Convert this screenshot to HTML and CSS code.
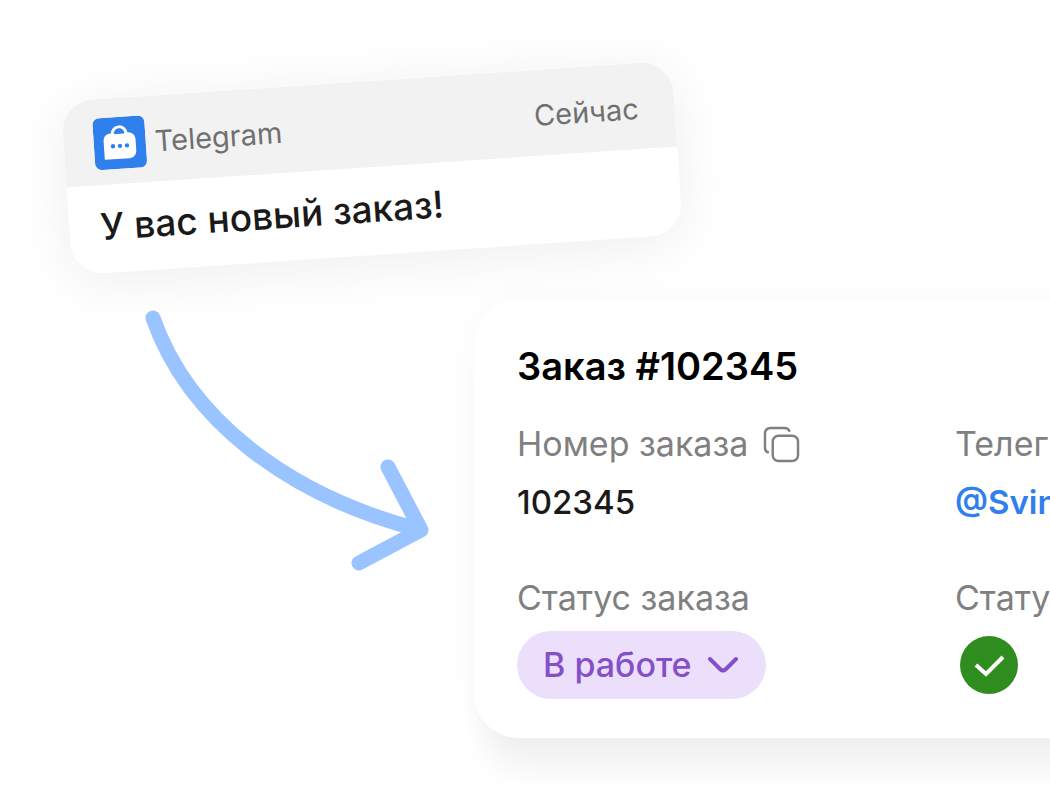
FILE: index.html
```html
<!DOCTYPE html>
<html lang="ru">
<head>
    <meta charset="UTF-8">
    <meta name="viewport" content="width=device-width, initial-scale=1.0">
    <title>Заказ #102345</title>
    <link rel="stylesheet" href="styles.css">
</head>
<body>
    <main class="scene">
        <article class="notification">
            <header class="notification-header">
                <svg class="app-icon" viewBox="0 0 52 52" aria-hidden="true">
                    <rect width="52" height="52" rx="7" fill="#2f80ed"/>
                    <path d="M19 18v-1a7 7 0 0 1 14 0v1" fill="none" stroke="#fff" stroke-width="3"/>
                    <path d="M10 42V23a7 7 0 0 1 7-7h18a7 7 0 0 1 7 7v12a7 7 0 0 1-7 7z" fill="#fff"/>
                    <path d="M21 17a5 5 0 0 1 10 0" fill="#2f80ed"/>
                    <g fill="#2f80ed">
                        <circle cx="19" cy="29" r="2.200"/>
                        <circle cx="26" cy="29" r="2.200"/>
                        <circle cx="33" cy="29" r="2.200"/>
                    </g>
                </svg>
                <span class="app-name">Telegram</span>
                <time class="time">Сейчас</time>
            </header>
            <p class="message">У вас новый заказ!</p>
        </article>

        <div class="flow">
            <svg class="arrow" viewBox="0 0 285 262" aria-hidden="true">
                <path d="M8 8C43 108 142 186 276 220M243 157L276 220L214 253"/>
            </svg>

            <section class="order">
                <h1 class="order-title">Заказ #102345</h1>
                <div class="fields">
                    <div class="field">
                        <div class="label">
                            <span>Номер заказа</span>
                            <button class="copy" type="button" aria-label="Скопировать">
                                <svg viewBox="0 0 36 36">
                                    <rect x="9" y="9" width="26" height="26" rx="6"/>
                                    <path d="M4 26Q1 25 1 21V7Q1 1 7 1H21Q25 1 26 4"/>
                                </svg>
                            </button>
                        </div>
                        <span class="value">102345</span>
                    </div>
                    <div class="field">
                        <div class="label">Телеграм</div>
                        <a class="value link" href="#">@Svin</a>
                    </div>
                    <div class="field field-status">
                        <label class="label" for="status">Статус заказа</label>
                        <div class="status">
                            <select id="status">
                                <option>В работе</option>
                            </select>
                            <svg class="chevron" viewBox="0 0 32 18" aria-hidden="true">
                                <path d="M3 3L13 13Q16 16 19 13L29 3"/>
                            </svg>
                        </div>
                    </div>
                    <div class="field field-status">
                        <div class="label">Статус</div>
                        <svg class="done" viewBox="0 0 58 58" role="img" aria-label="Готово">
                            <circle cx="29" cy="29" r="29" fill="#2f8d20"/>
                            <path d="M16 29L26 38L43 21"/>
                        </svg>
                    </div>
                </div>
            </section>
        </div>
    </main>
</body>
</html>
```
FILE: styles.css
```css
:root {
    --blue: #2f80ed;
    --sky: #99c4ff;
    --gray: #808080;
    --purple: #8450c8;
    --lilac: #ecdffc;
}

* {
    box-sizing: border-box;
}

body {
    margin: 0;
    background: #fff;
    color: #1a1a1a;
    font-family: Inter, "Liberation Sans", sans-serif;
}

.scene {
    display: flow-root;
    min-height: 100vh;
    overflow: hidden;
}

/* Notification */
.notification {
    width: 612px;
    margin: 81px 0 0 66px;
    border-radius: 32px;
    overflow: hidden;
    background: #fff;
    box-shadow: 0 8px 56px rgba(0, 0, 0, 0.07);
    transform: rotate(-3.84deg);
}

.notification-header {
    display: flex;
    align-items: center;
    gap: 9px;
    height: 86px;
    padding: 4px 36px 0 30px;
    background: #f2f2f2;
    color: #707070;
    font-size: 29px;
}

.app-icon {
    width: 52px;
    height: 52px;
}

.time {
    margin-left: auto;
}

.message {
    margin: 0;
    padding: 18px 31px 22px;
    font-size: 37px;
    font-weight: 500;
    line-height: 48px;
}

/* Arrow and order card */
.flow {
    display: flex;
    align-items: flex-start;
    gap: 44px;
    margin: 45px 0 0 145px;
}

.arrow {
    flex: none;
    width: 285px;
    margin-top: 10px;
    fill: none;
    stroke: var(--sky);
    stroke-width: 15;
    stroke-linecap: round;
    stroke-linejoin: round;
}

.order {
    flex: none;
    padding: 42px 43px 39px;
    border-radius: 44px;
    background: #fff;
    box-shadow: 0 44px 30px -12px rgba(0, 0, 0, 0.05), 0 0 32px rgba(0, 0, 0, 0.03);
}

.order-title {
    margin: 0 0 32px;
    color: #000;
    font-size: 38px;
    font-weight: 600;
    line-height: 48px;
}

.fields {
    display: grid;
    grid-template-columns: 438px 438px;
    row-gap: 52px;
}

.field {
    display: flex;
    flex-direction: column;
    align-items: flex-start;
    gap: 14px;
}

.field-status {
    gap: 11px;
}

.label {
    display: flex;
    align-items: center;
    gap: 16px;
    color: var(--gray);
    font-size: 34px;
    line-height: 44px;
}

.copy {
    display: flex;
    padding: 0;
    border: 0;
    background: none;
    cursor: pointer;
}

.copy svg {
    width: 35px;
    height: 35px;
    fill: none;
    stroke: var(--gray);
    stroke-width: 2.5;
    stroke-linecap: round;
    overflow: visible;
}

.value {
    font-size: 33px;
    font-weight: 500;
    line-height: 44px;
}

.link {
    color: var(--blue);
    font-weight: 600;
    text-decoration: none;
}

.status {
    display: grid;
    align-items: center;
}

.status select {
    grid-area: 1 / 1;
    height: 68px;
    padding: 0 74px 2px 26px;
    border: 0;
    border-radius: 34px;
    appearance: none;
    background: var(--lilac);
    color: var(--purple);
    font: 500 34px Inter, "Liberation Sans", sans-serif;
}

.chevron {
    grid-area: 1 / 1;
    justify-self: end;
    width: 32px;
    margin-right: 27px;
    fill: none;
    stroke: var(--purple);
    stroke-width: 4;
    stroke-linecap: round;
    pointer-events: none;
}

.done {
    width: 58px;
    margin: 5px;
}

.done path {
    fill: none;
    stroke: #fff;
    stroke-width: 4;
}
```
